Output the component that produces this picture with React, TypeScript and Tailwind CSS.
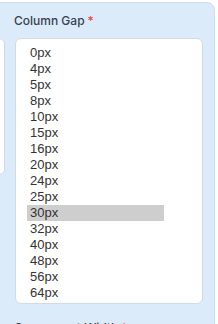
const gaps = ["0px", "4px", "5px", "8px", "10px", "15px", "16px", "20px", "24px", "25px", "30px", "32px", "40px", "48px", "56px", "64px"]

export default function App() {
  const selected = "30px"

  return (
    <div className="h-[324px] w-[218px] overflow-hidden bg-white pt-[2px] font-['Inter',sans-serif]">
      <div className="ml-[-200px] w-[415px] rounded-tr-lg border border-[#c9dff3] bg-[#dcebf9] pl-3 pr-[11px] pt-[9px] pb-6">
        <div className="flex gap-[10px]">
          <div className="flex-1 pt-[26px]">
            <div className="h-[137px] rounded-md border border-[#cfdbe6] bg-white" />
          </div>
          <div className="w-[188px]">
            <label className="-ml-[1px] flex h-[18px] items-center text-[12px] font-medium text-[#374151]">
              Column Gap
              <span className="ml-[3px] text-[#ef4444]">*</span>
            </label>
            <div className="mt-2 h-[266px] rounded-md border border-[#cfdbe6] bg-white pl-[11px] pt-[6px]">
              <ul className="w-[137px] font-['Liberation_Sans',Arial,sans-serif] text-[13px] text-[#333]">
                {gaps.map((g) => (
                  <li
                    key={g}
                    className={`h-4 pl-[3px] leading-4 ${g === selected ? "bg-[#cecece]" : ""}`}
                  >
                    {g}
                  </li>
                ))}
              </ul>
            </div>
            <label className="-ml-[1px] mt-[15px] flex h-[18px] items-center text-[12px] font-medium text-[#374151]">
              Component Width
              <span className="ml-[3px] text-[#ef4444]">*</span>
            </label>
          </div>
        </div>
      </div>
    </div>
  )
}
